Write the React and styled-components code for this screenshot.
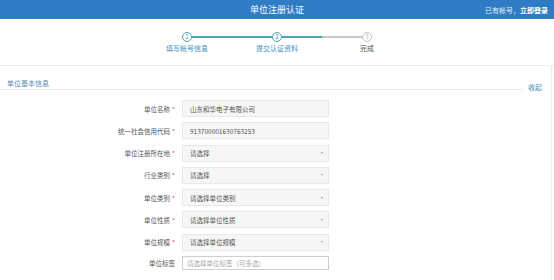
import React from 'react';
import styled, { createGlobalStyle } from 'styled-components';

const GlobalStyle = createGlobalStyle`
  body {
    margin: 0;
    background: #fff;
    font-family: "Noto Sans CJK SC", "Noto Sans", sans-serif;
  }
`;

const Header = styled.div`
  height: 19px;
  background: #2f7bc4;
  display: grid;
  grid-template-columns: 1fr auto 1fr;
  align-items: center;
  color: #fff;
`;

const Title = styled.div`
  font-size: 9px;
  line-height: 19px;
`;

const LoginTip = styled.div`
  justify-self: end;
  padding-right: 6px;
  font-size: 7px;
  color: #e6f0fa;
  b {
    color: #fff;
    font-weight: bold;
  }
`;

const Steps = styled.div`
  height: 47px;
  box-sizing: border-box;
  padding-top: 13px;
  border-bottom: 1px solid #ededed;
  display: flex;
  justify-content: center;
`;

const Step = styled.div`
  width: 90px;
  display: flex;
  flex-direction: column;
  align-items: center;
`;

const Track = styled.div`
  width: 100%;
  display: flex;
  align-items: center;
`;

const Bar = styled.div`
  flex: 1;
  height: 2px;
  background: ${p => p.$color || 'transparent'};
`;

const Dot = styled.div`
  width: 10px;
  height: 10px;
  box-sizing: border-box;
  border-radius: 50%;
  border: 1.5px solid ${p => (p.$done ? '#4aa3b6' : '#c4c4c4')};
  color: ${p => (p.$done ? '#3a95aa' : '#b5b5b5')};
  background: #fff;
  font-size: 6px;
  line-height: 1;
  display: flex;
  align-items: center;
  justify-content: center;
`;

const StepLabel = styled.div`
  margin-top: 2px;
  font-size: 7px;
  line-height: 9px;
  color: ${p => (p.$done ? '#3d8fbf' : '#555')};
`;

const Panel = styled.div`
  width: 552px;
  box-sizing: border-box;
  border-right: 1px solid #ececec;
  padding-top: 12px;
  min-height: 214px;
`;

const SectionHead = styled.div`
  display: flex;
  align-items: flex-end;
  padding-right: 9px;
`;

const SectionTitle = styled.div`
  flex: 1;
  padding: 0 0 1px 7px;
  border-bottom: 1px solid #eaeaea;
  font-size: 7px;
  line-height: 10px;
  color: #5b8db8;
`;

const Toggle = styled.a`
  margin: 0 0 -2px 5px;
  font-size: 7px;
  line-height: 10px;
  color: #3f8dbb;
  cursor: pointer;
`;

const Form = styled.div`
  margin-top: 10px;
  display: grid;
  grid-template-columns: 182px 147px;
  row-gap: 5.3px;
  align-items: center;
`;

const Label = styled.div`
  padding-right: 7px;
  text-align: right;
  font-size: 6.5px;
  color: #555;
  em {
    font-style: normal;
    color: #e04040;
    margin-left: 2px;
  }
`;

const Field = styled.div`
  height: ${p => (p.$plain ? '14px' : '17px')};
  box-sizing: border-box;
  padding: 0 5px 0 ${p => (p.$plain ? '4px' : '7px')};
  background: ${p => (p.$plain ? '#fff' : '#f6f6f6')};
  border: 1px solid ${p => (p.$plain ? '#cfcfcf' : '#e8e8e8')};
  font-size: 6.5px;
  color: ${p => (p.$plain ? '#a8a8a8' : '#555')};
  display: flex;
  align-items: center;
  justify-content: space-between;
`;

const Caret = styled.i`
  width: 0;
  height: 0;
  border-left: 1.5px solid transparent;
  border-right: 1.5px solid transparent;
  border-top: 2.5px solid #999;
`;

const steps = [
  { n: 1, label: '填写帐号信息', done: true, left: null, right: '#4aa3b6' },
  { n: 2, label: '提交认证资料', done: true, left: '#4aa3b6', right: '#4aa3b6' },
  { n: 3, label: '完成', done: false, left: '#c8c8c8', right: null }
];

const rows = [
  { label: '单位名称', value: '山东和华电子有限公司' },
  { label: '统一社会信用代码', value: '913700001630763253' },
  { label: '单位注册所在地', value: '请选择', select: true },
  { label: '行业类别', value: '请选择', select: true },
  { label: '单位类别', value: '请选择单位类别', select: true },
  { label: '单位性质', value: '请选择单位性质', select: true },
  { label: '单位规模', value: '请选择单位规模', select: true },
  { label: '单位标签', value: '请选择单位标签（可多选）', plain: true }
];

const App = () => (
  <>
    <GlobalStyle />
    <Header>
      <span />
      <Title>单位注册认证</Title>
      <LoginTip>
        已有帐号，<b>立即登录</b>
      </LoginTip>
    </Header>
    <Steps>
      {steps.map(s => (
        <Step key={s.n}>
          <Track>
            <Bar $color={s.left} />
            <Dot $done={s.done}>{s.n}</Dot>
            <Bar $color={s.right} />
          </Track>
          <StepLabel $done={s.done}>{s.label}</StepLabel>
        </Step>
      ))}
    </Steps>
    <Panel>
      <SectionHead>
        <SectionTitle>单位基本信息</SectionTitle>
        <Toggle>收起</Toggle>
      </SectionHead>
      <Form>
        {rows.map(r => (
          <React.Fragment key={r.label}>
            <Label>
              {r.label}
              {!r.plain && <em>*</em>}
            </Label>
            <Field $plain={r.plain}>
              {r.value}
              {r.select && <Caret />}
            </Field>
          </React.Fragment>
        ))}
      </Form>
    </Panel>
  </>
);

export default App;
